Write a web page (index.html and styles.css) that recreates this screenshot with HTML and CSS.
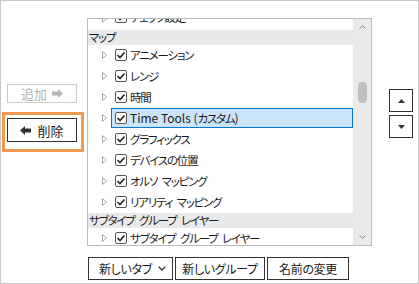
FILE: index.html
```html
<!DOCTYPE html>
<html lang="ja">
<head>
<meta charset="utf-8">
<link rel="stylesheet" href="styles.css">
</head>
<body>
<div class="frame">
  <div class="main">
    <div class="left">
      <div class="btn btn-add"><span>追加</span>
        <svg width="11" height="9" viewBox="0 0 11 9"><path d="M11 4.5 L6 0 L6 2.5 L0 2.5 L0 6.5 L6 6.5 L6 9 Z" fill="#b4b4b4"/></svg>
      </div>
      <div class="focus">
        <div class="btn btn-del">
          <svg width="11" height="9" viewBox="0 0 11 9"><path d="M0 4.5 L5 0 L5 2.5 L11 2.5 L11 6.5 L5 6.5 L5 9 Z" fill="#333"/></svg>
          <span>削除</span>
        </div>
      </div>
    </div>
    <div class="list">
      <div class="content">
        <div class="item first"><span class="tri"><svg width="5" height="8" viewBox="0 0 5 8"><path d="M0.5 0.5 L4.5 4 L0.5 7.5 Z" fill="#fff" stroke="#a8a8a8"/></svg></span><span class="body"><span class="cb"><svg width="12" height="12" viewBox="0 0 12 12"><rect x="0.5" y="0.5" width="11" height="11" rx="1.5" fill="#fff" stroke="#555"/><path d="M2.5 6 L5 8.5 L9.5 3.5" fill="none" stroke="#222" stroke-width="1.6"/></svg></span><span class="lbl">チェック設定</span></span></div>
        <div class="hdr">マップ</div>
        <div class="item"><span class="tri"><svg width="5" height="8" viewBox="0 0 5 8"><path d="M0.5 0.5 L4.5 4 L0.5 7.5 Z" fill="#fff" stroke="#a8a8a8"/></svg></span><span class="body"><span class="cb"><svg width="12" height="12" viewBox="0 0 12 12"><rect x="0.5" y="0.5" width="11" height="11" rx="1.5" fill="#fff" stroke="#555"/><path d="M2.5 6 L5 8.5 L9.5 3.5" fill="none" stroke="#222" stroke-width="1.6"/></svg></span><span class="lbl">アニメーション</span></span></div>
        <div class="item"><span class="tri"><svg width="5" height="8" viewBox="0 0 5 8"><path d="M0.5 0.5 L4.5 4 L0.5 7.5 Z" fill="#fff" stroke="#a8a8a8"/></svg></span><span class="body"><span class="cb"><svg width="12" height="12" viewBox="0 0 12 12"><rect x="0.5" y="0.5" width="11" height="11" rx="1.5" fill="#fff" stroke="#555"/><path d="M2.5 6 L5 8.5 L9.5 3.5" fill="none" stroke="#222" stroke-width="1.6"/></svg></span><span class="lbl">レンジ</span></span></div>
        <div class="item"><span class="tri"><svg width="5" height="8" viewBox="0 0 5 8"><path d="M0.5 0.5 L4.5 4 L0.5 7.5 Z" fill="#fff" stroke="#a8a8a8"/></svg></span><span class="body"><span class="cb"><svg width="12" height="12" viewBox="0 0 12 12"><rect x="0.5" y="0.5" width="11" height="11" rx="1.5" fill="#fff" stroke="#555"/><path d="M2.5 6 L5 8.5 L9.5 3.5" fill="none" stroke="#222" stroke-width="1.6"/></svg></span><span class="lbl">時間</span></span></div>
        <div class="item sel"><span class="tri"><svg width="5" height="8" viewBox="0 0 5 8"><path d="M0.5 0.5 L4.5 4 L0.5 7.5 Z" fill="#fff" stroke="#a8a8a8"/></svg></span><span class="body"><span class="cb"><svg width="12" height="12" viewBox="0 0 12 12"><rect x="0.5" y="0.5" width="11" height="11" rx="1.5" fill="#fff" stroke="#555"/><path d="M2.5 6 L5 8.5 L9.5 3.5" fill="none" stroke="#222" stroke-width="1.6"/></svg></span><span class="lbl"><span class="lat">Time Tools (</span>カスタム<span class="lat">)</span></span></span></div>
        <div class="item"><span class="tri"><svg width="5" height="8" viewBox="0 0 5 8"><path d="M0.5 0.5 L4.5 4 L0.5 7.5 Z" fill="#fff" stroke="#a8a8a8"/></svg></span><span class="body"><span class="cb"><svg width="12" height="12" viewBox="0 0 12 12"><rect x="0.5" y="0.5" width="11" height="11" rx="1.5" fill="#fff" stroke="#555"/><path d="M2.5 6 L5 8.5 L9.5 3.5" fill="none" stroke="#222" stroke-width="1.6"/></svg></span><span class="lbl">グラフィックス</span></span></div>
        <div class="item"><span class="tri"><svg width="5" height="8" viewBox="0 0 5 8"><path d="M0.5 0.5 L4.5 4 L0.5 7.5 Z" fill="#fff" stroke="#a8a8a8"/></svg></span><span class="body"><span class="cb"><svg width="12" height="12" viewBox="0 0 12 12"><rect x="0.5" y="0.5" width="11" height="11" rx="1.5" fill="#fff" stroke="#555"/><path d="M2.5 6 L5 8.5 L9.5 3.5" fill="none" stroke="#222" stroke-width="1.6"/></svg></span><span class="lbl">デバイスの位置</span></span></div>
        <div class="item"><span class="tri"><svg width="5" height="8" viewBox="0 0 5 8"><path d="M0.5 0.5 L4.5 4 L0.5 7.5 Z" fill="#fff" stroke="#a8a8a8"/></svg></span><span class="body"><span class="cb"><svg width="12" height="12" viewBox="0 0 12 12"><rect x="0.5" y="0.5" width="11" height="11" rx="1.5" fill="#fff" stroke="#555"/><path d="M2.5 6 L5 8.5 L9.5 3.5" fill="none" stroke="#222" stroke-width="1.6"/></svg></span><span class="lbl">オルソ マッピング</span></span></div>
        <div class="item"><span class="tri"><svg width="5" height="8" viewBox="0 0 5 8"><path d="M0.5 0.5 L4.5 4 L0.5 7.5 Z" fill="#fff" stroke="#a8a8a8"/></svg></span><span class="body"><span class="cb"><svg width="12" height="12" viewBox="0 0 12 12"><rect x="0.5" y="0.5" width="11" height="11" rx="1.5" fill="#fff" stroke="#555"/><path d="M2.5 6 L5 8.5 L9.5 3.5" fill="none" stroke="#222" stroke-width="1.6"/></svg></span><span class="lbl">リアリティ マッピング</span></span></div>
        <div class="hdr">サブタイプ グループ レイヤー</div>
        <div class="item"><span class="tri"><svg width="5" height="8" viewBox="0 0 5 8"><path d="M0.5 0.5 L4.5 4 L0.5 7.5 Z" fill="#fff" stroke="#a8a8a8"/></svg></span><span class="body"><span class="cb"><svg width="12" height="12" viewBox="0 0 12 12"><rect x="0.5" y="0.5" width="11" height="11" rx="1.5" fill="#fff" stroke="#555"/><path d="M2.5 6 L5 8.5 L9.5 3.5" fill="none" stroke="#222" stroke-width="1.6"/></svg></span><span class="lbl">サブタイプ グループ レイヤー</span></span></div>
      </div>
      <div class="sb">
        <svg class="sb-up" width="7" height="4" viewBox="0 0 7 4"><path d="M0.5 3.5 L3.5 0.7 L6.5 3.5" fill="none" stroke="#858585"/></svg>
        <div class="thumb"></div>
        <svg class="sb-down" width="7" height="4" viewBox="0 0 7 4"><path d="M0.5 0.5 L3.5 3.3 L6.5 0.5" fill="none" stroke="#858585"/></svg>
      </div>
    </div>
    <div class="right">
      <div class="mv"><svg width="7" height="4" viewBox="0 0 7 4"><path d="M0 4 L3.5 0 L7 4 Z" fill="#333"/></svg></div>
      <div class="mv"><svg width="7" height="4" viewBox="0 0 7 4"><path d="M0 0 L3.5 4 L7 0 Z" fill="#333"/></svg></div>
    </div>
  </div>
  <div class="bottom">
    <div class="bbtn tab"><span>新しいタブ</span><svg width="8" height="5" viewBox="0 0 8 5"><path d="M0.7 0.7 L4 4 L7.3 0.7" fill="none" stroke="#333" stroke-width="1.3"/></svg></div>
    <div class="bbtn grp">新しいグループ</div>
    <div class="bbtn ren">名前の変更</div>
  </div>
</div>
</body>
</html>
```

FILE: styles.css
```css
body {
  margin: 0;
  font-family: "Noto Sans CJK JP", "Noto Sans", sans-serif;
  color: #1a1a1a;
}
.frame {
  width: 419px;
  height: 284px;
  box-sizing: border-box;
  border: 1px solid #c8c8c8;
  background: #fff;
  padding-top: 17px;
  display: flex;
  flex-direction: column;
}
.main {
  display: flex;
  height: 228px;
}
.left {
  width: 86px;
  box-sizing: border-box;
  display: flex;
  flex-direction: column;
  padding-top: 66px;
  padding-left: 6px;
}
.btn {
  width: 70px;
  box-sizing: border-box;
  display: flex;
  align-items: center;
  justify-content: center;
  font-size: 13px;
  line-height: 1;
  background: #fff;
}
.btn-add {
  height: 19px;
  border: 1px solid #cccccc;
  color: #b4b4b4;
  gap: 5px;
}
.focus {
  margin-top: 9px;
  margin-left: -5px;
  width: 82px;
  height: 40px;
  box-sizing: border-box;
  border: 3px solid #ef9a4f;
  padding: 3px 0 0 2px;
}
.btn-del {
  height: 24px;
  border: 1px solid #333;
  color: #222;
  gap: 6px;
}
.list {
  width: 285px;
  height: 228px;
  box-sizing: border-box;
  border: 1px solid #bcbcbc;
  display: flex;
  overflow: hidden;
}
.content {
  flex: 1;
  overflow: hidden;
  display: flex;
  flex-direction: column;
  font-size: 11.5px;
  letter-spacing: -1.2px;
  word-spacing: 3px;
  font-feature-settings: "palt";
}
.lat {
  font-size: 12px;
  letter-spacing: 0;
  word-spacing: 0;
}
.hdr {
  flex: none;
  height: 15px;
  line-height: 15px;
  background: #e9e9e9;
  padding-left: 1px;
  white-space: nowrap;
}
.item {
  flex: none;
  height: 21px;
  display: flex;
  align-items: flex-start;
}
.item.first {
  margin-top: -10px;
}
.item.first .body {
  margin-top: -2px;
}
.tri {
  margin-left: 14px;
  width: 5px;
  height: 20px;
  display: flex;
  align-items: center;
}
.tri svg { display: block; }
.body {
  margin-left: 4px;
  flex: 1;
  height: 20px;
  box-sizing: border-box;
  border: 1px solid transparent;
  padding-left: 3px;
  display: flex;
  align-items: center;
  white-space: nowrap;
}
.sel .body {
  border-color: #0078d7;
  background: #cce4f7;
}
.cb {
  width: 12px;
  height: 12px;
  display: flex;
}
.cb svg { display: block; }
.lbl {
  margin-left: 3px;
  line-height: 18px;
}
.sb {
  width: 18px;
  background: #eaeaea;
  display: flex;
  flex-direction: column;
  align-items: center;
}
.sb-up {
  display: block;
  margin-top: 6px;
}
.thumb {
  width: 9px;
  height: 21px;
  margin-top: 53px;
  border-radius: 4px;
  background: #c0c0c0;
}
.sb-down {
  display: block;
  margin-top: auto;
  margin-bottom: 6px;
}
.right {
  padding-left: 17px;
  padding-top: 71px;
  display: flex;
  flex-direction: column;
  gap: 3px;
}
.mv {
  width: 24px;
  height: 23px;
  box-sizing: border-box;
  border: 1px solid #333;
  display: flex;
  align-items: center;
  justify-content: center;
}
.mv svg { display: block; }
.bottom {
  margin-top: 11px;
  padding-left: 87px;
  display: flex;
  gap: 2px;
}
.bbtn {
  height: 23px;
  box-sizing: border-box;
  border: 1px solid #333;
  display: flex;
  align-items: center;
  justify-content: center;
  font-size: 12px;
  letter-spacing: -0.3px;
  font-feature-settings: "palt";
  white-space: nowrap;
}
.tab {
  width: 85px;
  justify-content: space-between;
  padding: 0 6px 0 10px;
}
.grp { width: 90px; }
.ren { width: 82px; }
```
